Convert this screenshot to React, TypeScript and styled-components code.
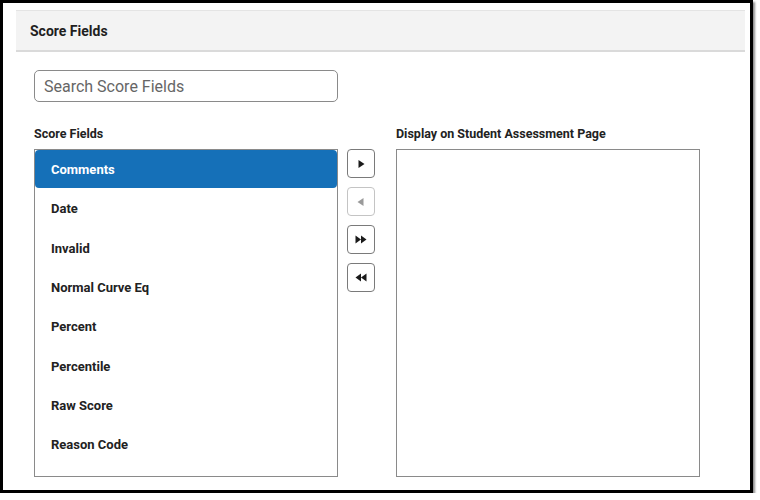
import styled, { createGlobalStyle } from 'styled-components';

const GlobalStyle = createGlobalStyle`
  html, body {
    margin: 0;
    padding: 0;
    background: #ffffff;
  }

  body {
    font-family: Roboto, 'Liberation Sans', Arial, sans-serif;
    color: #222222;
  }
`;

const Frame = styled.div`
  box-sizing: border-box;
  width: 753px;
  height: 493px;
  border: 3px solid #000000;
  box-shadow: 2px 2px 2px rgba(0, 0, 0, 0.45);
  background: #ffffff;
  padding: 7px 5px 0 13px;
  display: flex;
  flex-direction: column;
`;

const Header = styled.div`
  box-sizing: border-box;
  height: 42px;
  background: #f3f3f3;
  border-top: 1px solid #e4e4e4;
  border-bottom: 2px solid #dadada;
  display: flex;
  align-items: center;
  padding-left: 14px;
  padding-top: 1px;
  font-size: 14px;
  font-weight: 700;
  color: #1f1f1f;
`;

const Body = styled.div`
  padding: 18px 0 0 18px;
  display: flex;
  flex-direction: column;
`;

const SearchInput = styled.input`
  box-sizing: border-box;
  width: 304px;
  height: 32px;
  border: 1px solid #8a8a8a;
  border-radius: 5px;
  padding: 0 9px;
  font-family: inherit;
  font-size: 16px;
  color: #222222;
  outline: none;

  &::placeholder {
    color: #666666;
  }
`;

const Columns = styled.div`
  margin-top: 24px;
  display: flex;
  align-items: flex-start;
`;

const ListColumn = styled.div`
  display: flex;
  flex-direction: column;
`;

const Label = styled.div`
  font-size: 12.5px;
  font-weight: 700;
  color: #222222;
  line-height: 15px;
  margin-bottom: 8px;
`;

const ListBox = styled.div`
  box-sizing: border-box;
  width: 304px;
  height: 328px;
  border: 1px solid #8a8a8a;
  display: flex;
  flex-direction: column;
`;

const Item = styled.div<{ $selected?: boolean }>`
  box-sizing: border-box;
  height: ${(p) => (p.$selected ? '38.3px' : '39.3px')};
  margin-bottom: ${(p) => (p.$selected ? '1px' : '0')};
  flex-shrink: 0;
  display: flex;
  align-items: center;
  padding-left: 16px;
  font-size: 13px;
  font-weight: 700;
  color: ${(p) => (p.$selected ? '#ffffff' : '#222222')};
  background: ${(p) => (p.$selected ? '#1570b8' : 'transparent')};
  border-radius: ${(p) => (p.$selected ? '4px' : '0')};
`;

const ButtonColumn = styled.div`
  margin: 23px 21px 0 9px;
  display: flex;
  flex-direction: column;
  gap: 9px;
`;

const MoveButton = styled.button<{ $disabled?: boolean }>`
  box-sizing: border-box;
  width: 28px;
  height: 29px;
  padding: 0;
  border: 1px solid ${(p) => (p.$disabled ? '#c4c4c4' : '#7a7a7a')};
  border-radius: 4px;
  background: #ffffff;
  display: flex;
  align-items: center;
  justify-content: center;
  color: ${(p) => (p.$disabled ? '#9a9a9a' : '#1a1a1a')};
`;

const items = [
  'Comments',
  'Date',
  'Invalid',
  'Normal Curve Eq',
  'Percent',
  'Percentile',
  'Raw Score',
  'Reason Code',
];

const Right = () => (
  <svg width="8" height="10" viewBox="0 0 8 10">
    <path d="M1.5 1 L7.5 5 L1.5 9 Z" fill="currentColor" />
  </svg>
);

const Left = () => (
  <svg width="8" height="10" viewBox="0 0 8 10">
    <path d="M6.5 1 L0.5 5 L6.5 9 Z" fill="currentColor" />
  </svg>
);

const DoubleRight = () => (
  <svg width="12" height="9" viewBox="0 0 12 9">
    <path d="M0.5 0.5 L6 4.5 L0.5 8.5 Z M6 0.5 L11.5 4.5 L6 8.5 Z" fill="currentColor" />
  </svg>
);

const DoubleLeft = () => (
  <svg width="12" height="9" viewBox="0 0 12 9">
    <path d="M6 0.5 L0.5 4.5 L6 8.5 Z M11.5 0.5 L6 4.5 L11.5 8.5 Z" fill="currentColor" />
  </svg>
);

const App = () => {
  return (
    <>
      <GlobalStyle />
      <Frame>
        <Header>Score Fields</Header>
        <Body>
          <SearchInput placeholder="Search Score Fields" />
          <Columns>
            <ListColumn>
              <Label>Score Fields</Label>
              <ListBox>
                {items.map((name, index) => (
                  <Item key={name} $selected={index === 0}>
                    {name}
                  </Item>
                ))}
              </ListBox>
            </ListColumn>
            <ButtonColumn>
              <MoveButton>
                <Right />
              </MoveButton>
              <MoveButton $disabled>
                <Left />
              </MoveButton>
              <MoveButton>
                <DoubleRight />
              </MoveButton>
              <MoveButton>
                <DoubleLeft />
              </MoveButton>
            </ButtonColumn>
            <ListColumn>
              <Label>Display on Student Assessment Page</Label>
              <ListBox />
            </ListColumn>
          </Columns>
        </Body>
      </Frame>
    </>
  );
};

export default App;
